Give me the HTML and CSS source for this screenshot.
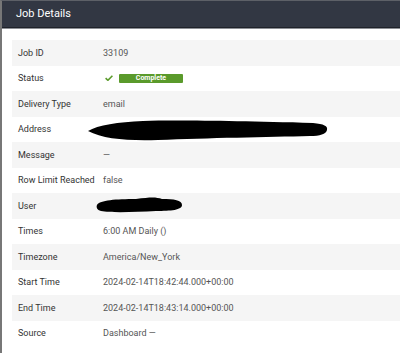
FILE: index.html
```html
<!DOCTYPE html>
<html lang="en">
<head>
  <meta charset="UTF-8" />
  <title>Job Details</title>
  <link rel="stylesheet" href="styles.css">
</head>
<body>
  <div class="panel">
    <div class="panel-header">Job Details</div>
    <div class="details">
      <div class="row"><span class="label">Job ID</span><span class="value">33109</span></div>
      <div class="row">
        <span class="label">Status</span>
        <span class="value">
          <svg class="check" width="8" height="6" viewBox="0 0 8 6"><path d="M0.6 3.2 L2.9 5.3 L7.4 0.7" fill="none" stroke="#5b9b2b" stroke-width="1.6"/></svg>
          <span class="badge">Complete</span>
        </span>
      </div>
      <div class="row"><span class="label">Delivery Type</span><span class="value">email</span></div>
      <div class="row">
        <span class="label">Address</span>
        <span class="value">&mdash;</span>
        <svg class="redact redact-address" width="242" height="24" viewBox="0 0 242 24"><path d="M0 13 C10 7 30 4 55 3 C90 2 150 3 225 5 C236 6 240 8 239 12 C238 16 232 18 222 18 C180 19 120 20 70 22 C40 23 15 21 0 13 Z" fill="#000"/></svg>
      </div>
      <div class="row"><span class="label">Message</span><span class="value">&mdash;</span></div>
      <div class="row"><span class="label">Row Limit Reached</span><span class="value">false</span></div>
      <div class="row">
        <span class="label">User</span>
        <span class="value"></span>
        <svg class="redact redact-user" width="88" height="18" viewBox="0 0 88 18"><path d="M1 9 C4 4 20 3 40 3 C55 1 60 1 66 3 C78 3 86 4 86 9 C86 14 75 15 60 15 C40 16 15 17 5 15 C1 14 0 11 1 9 Z" fill="#000"/></svg>
      </div>
      <div class="row"><span class="label">Times</span><span class="value">6:00 AM Daily ()</span></div>
      <div class="row"><span class="label">Timezone</span><span class="value">America/New_York</span></div>
      <div class="row"><span class="label">Start Time</span><span class="value">2024-02-14T18:42:44.000+00:00</span></div>
      <div class="row"><span class="label">End Time</span><span class="value">2024-02-14T18:43:14.000+00:00</span></div>
      <div class="row"><span class="label">Source</span><span class="value">Dashboard &mdash;</span></div>
    </div>
  </div>
</body>
</html>
```

FILE: styles.css
```css
body {
  margin: 0;
  font-family: Roboto, "Liberation Sans", sans-serif;
  background: #fff;
}

.panel {
  border-left: 2px solid #777;
  border-top: 1px solid #5d6067;
  height: 352px;
  overflow: hidden;
}

.panel-header {
  background: #323743;
  color: #fff;
  font-size: 11px;
  height: 26px;
  line-height: 26px;
  padding-left: 14px;
  border-bottom: 1px solid #1f222a;
  box-shadow: 0 1px 0 #8b8e94;
}

.details {
  padding: 12px 0 0 10px;
}

.row {
  display: grid;
  grid-template-columns: 91px 1fr;
  align-items: center;
  height: 25.5px;
  font-size: 9px;
  position: relative;
  white-space: nowrap;
}

.row:nth-child(odd) {
  background: #f5f5f5;
}

.label {
  padding-left: 6px;
  color: #333;
}

.value {
  color: #555;
  display: flex;
  align-items: center;
  gap: 6px;
}

.check {
  margin-left: 2px;
}

.badge {
  background: #5a9a2b;
  color: #fff;
  font-size: 7px;
  font-weight: bold;
  width: 64px;
  height: 9px;
  line-height: 9px;
  text-align: center;
  border-radius: 1px;
}

.redact {
  position: absolute;
}

.redact-address {
  left: 76px;
  top: 1px;
}

.redact-user {
  left: 84px;
  top: 3px;
}
```
